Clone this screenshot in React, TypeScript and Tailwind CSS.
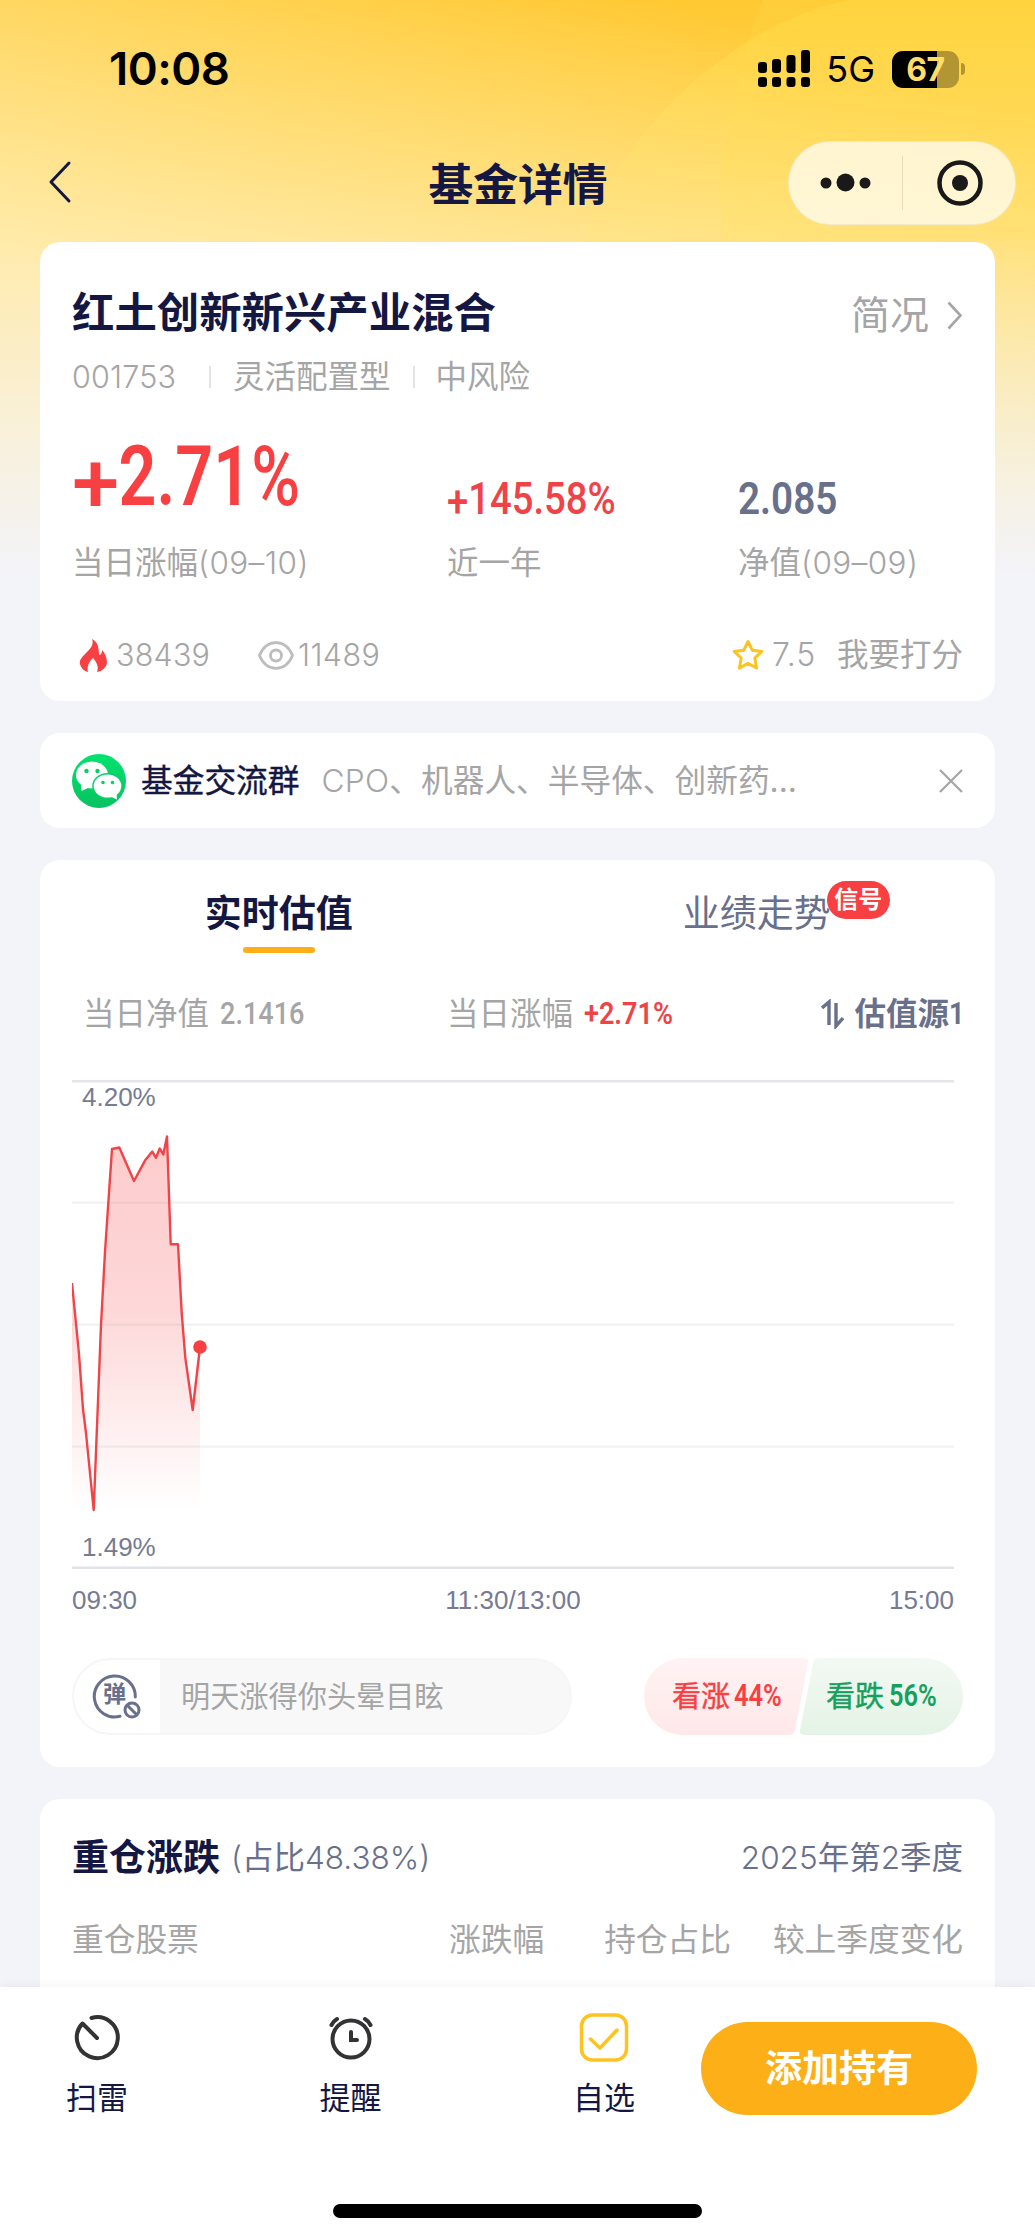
import React from "react";

const NUM = "font-['Roboto','Noto_Sans_CJK_SC',sans-serif]";
const AXIS = "font-['Liberation_Sans',Arial,sans-serif]";

const LINE_POINTS =
    "0,203 7,274 11,329 14,353 21.7,430 29,245 33,172 36.3,123 40,69 47.3,67.5 62,101 73,80.6 80.3,71.6 84,77.8 87.7,68.5 91.3,74.4 95,56.5 98.7,164.3 106,164.3 109.7,233 113.3,277.6 120.7,330 128,267";

const GRID_LINES = [121.6, 243.6, 365.6];

function Battery() {
    return (
        <div className="flex items-center gap-[2px]">
            <div className="flex h-[37px] w-[67px] items-center justify-center rounded-[11px] bg-[linear-gradient(to_right,#000_45px,rgba(0,0,0,0.3)_45px)]">
                <span className="font-['Inter',sans-serif] text-[32px] font-bold leading-[37px] tracking-[-0.5px] text-[#ffdd66]">
                    67
                </span>
            </div>
            <div className="h-[12px] w-[4px] rounded-r-full bg-black/30" />
        </div>
    );
}

function StatusBar() {
    return (
        <div className="flex h-[138px] items-center justify-between pl-[109px] pr-[70px]">
            <span className="font-['Inter',sans-serif] text-[45.5px] font-semibold leading-none tracking-[-0.5px] text-black">
                10:08
            </span>
            <div className="flex items-center">
                <svg width="52" height="38" viewBox="0 0 52 38">
                    <rect x="0" y="12" width="9" height="11" rx="3" />
                    <rect x="14" y="9" width="9" height="14" rx="3" />
                    <rect x="28.5" y="5" width="9" height="18" rx="3" />
                    <rect x="43" y="0" width="9" height="23" rx="3" />
                    <rect x="0" y="27" width="9" height="10" rx="3" />
                    <rect x="14" y="27" width="9" height="10" rx="3" />
                    <rect x="28.5" y="27" width="9" height="10" rx="3" />
                    <rect x="43" y="27" width="9" height="10" rx="3" />
                </svg>
                <span className="ml-[16px] mr-[17px] font-['Inter',sans-serif] text-[36px] leading-none text-black">
                    5G
                </span>
                <Battery />
            </div>
        </div>
    );
}

function NavBar() {
    return (
        <div className="grid h-[104px] grid-cols-3 items-start pl-[48px] pr-[19px]">
            <svg
                className="mt-[22px]"
                width="24"
                height="44"
                viewBox="0 0 24 44"
                fill="none"
                stroke="#141742"
                strokeWidth="3"
                strokeLinecap="round"
                strokeLinejoin="round"
            >
                <path d="M21 3 L3 22 L21 41" />
            </svg>
            <h1 className="-ml-[28px] mt-[17px] whitespace-nowrap text-center text-[44.8px] font-bold leading-[60px] text-[#141742]">
                基金详情
            </h1>
            <div className="ml-auto mt-[3px] flex h-[84px] w-[228px] items-center rounded-full border border-black/5 bg-white/70">
                <svg className="w-[113px]" height="20" viewBox="0 0 113 20">
                    <circle cx="37" cy="10" r="5.5" fill="#191919" />
                    <circle cx="56.5" cy="9.5" r="9" fill="#191919" />
                    <circle cx="76" cy="10" r="5.5" fill="#191919" />
                </svg>
                <div className="h-[54px] w-px bg-black/10" />
                <svg className="ml-[34px]" width="46" height="46" viewBox="0 0 46 46">
                    <circle
                        cx="23"
                        cy="23"
                        r="20.5"
                        fill="none"
                        stroke="#191919"
                        strokeWidth="4.5"
                    />
                    <circle cx="23" cy="23" r="8" fill="#191919" />
                </svg>
            </div>
        </div>
    );
}

function SummaryCard() {
    return (
        <section className="flex h-[459px] flex-col rounded-[20px] bg-white px-[32px] pt-[41px]">
            <div className="flex h-[60px] items-center justify-between">
                <h2 className="text-[42.4px] font-bold leading-[60px] text-[#141742]">
                    红土创新新兴产业混合
                </h2>
                <div className="mt-[4px] flex items-center text-[39px] text-[#a5a5a5]">
                    简况
                    <svg
                        className="ml-[18px]"
                        width="16"
                        height="29"
                        viewBox="0 0 16 29"
                        fill="none"
                        stroke="#a5a5a5"
                        strokeWidth="2.6"
                    >
                        <path d="M1.5 1.5 L13.5 14.5 L1.5 27.5" />
                    </svg>
                </div>
            </div>

            <div className="mt-[10px] flex h-[48px] items-center text-[31.5px] text-[#a5a5a5]">
                <span className="w-[105px] text-[30.5px] font-[350] tracking-[0.2px]">001753</span>
                <span className="ml-[32px] mr-[22px] h-[22px] w-[2px] bg-[#e3e3e3]" />
                <span>灵活配置型</span>
                <span className="ml-[22px] mr-[21px] h-[22px] w-[2px] bg-[#e3e3e3]" />
                <span>中风险</span>
            </div>

            <div className="mt-[37px] flex h-[84px] items-end">
                <div className={`w-[375px] ${NUM}`}>
                    <span className="inline-block origin-left scale-x-[0.8] whitespace-nowrap text-[83px] font-semibold leading-[90px] text-[#f84043]">
                        <span className="relative top-[7px] mr-[12px] inline-block origin-left scale-x-[1.28] font-medium">
                            +
                        </span>
                        2.71
                        <span className="font-medium">%</span>
                    </span>
                </div>
                <div className={`w-[291px] ${NUM}`}>
                    <span className="inline-block origin-left scale-x-[0.85] text-[45px] font-medium leading-[46px] text-[#f04347]">
                        <span className="relative top-[3px]">+</span>
                        145.58%
                    </span>
                </div>
                <div className={NUM}>
                    <span className="inline-block origin-left scale-x-[0.86] text-[45px] font-semibold leading-[46px] text-[#68708c]">
                        2.085
                    </span>
                </div>
            </div>

            <div className="mt-[18px] flex h-[46px] items-center text-[31.5px] text-[#a5a5a5]">
                <span className="w-[375px]">
                    当日涨幅<span className="font-[350] tracking-[0.4px]">(09–10)</span>
                </span>
                <span className="w-[291px]">近一年</span>
                <span>
                    净值<span className="font-[350] tracking-[0.4px]">(09–09)</span>
                </span>
            </div>

            <div className="mt-[46px] flex h-[46px] items-center text-[30.5px] font-[350] text-[#a5a5a5]">
                <svg className="ml-[7px]" width="28" height="33" viewBox="0 0 28 33">
                    <path
                        d="M13 0 C15 5 12 9 8 13 C3 18 0 21 1 25 C2 29 5 32 9 33 C8 28 9 24 14 19 C18 24 20 28 18 33 C23 32 27 29 28 24 C28 19 26 14 23 11 C23 14 22 16 20 16 C20 9 19 3 13 0 Z"
                        fill="#f84043"
                    />
                </svg>
                <span className="ml-[9px] w-[96px] tracking-[0.2px]">38439</span>
                <svg
                    className="ml-[46px]"
                    width="36"
                    height="29"
                    viewBox="0 0 36 29"
                    fill="none"
                    stroke="#bdbdbd"
                    strokeWidth="2.8"
                    strokeLinejoin="round"
                >
                    <path d="M1.5 14.5 C5 6 11 1.7 18 1.7 S31 6 34.5 14.5 C31 23 25 27.3 18 27.3 S5 23 1.5 14.5 Z" />
                    <circle cx="18" cy="14.5" r="5.5" />
                </svg>
                <span className="ml-[4px] tracking-[0.4px]">11489</span>
                <svg
                    className="ml-auto"
                    width="32"
                    height="32"
                    viewBox="0 0 32 32"
                    fill="none"
                    stroke="#fdc421"
                    strokeWidth="3"
                    strokeLinejoin="round"
                >
                    <path d="M16 2.5 L20.2 11.2 L29.8 12.5 L22.8 19.2 L24.6 29 L16 24.4 L7.4 29 L9.2 19.2 L2.2 12.5 L11.8 11.2 Z" />
                </svg>
                <span className="ml-[8px] text-[32px] tracking-[0.8px]">7.5</span>
                <span className="ml-[21px] text-[31.5px] font-normal">我要打分</span>
            </div>
        </section>
    );
}

function WeChatIcon() {
    return (
        <svg width="54" height="54" viewBox="0 0 54 54">
            <defs>
                <linearGradient id="wechat" x1="0" y1="0" x2="0" y2="1">
                    <stop offset="0" stopColor="#02e36f" />
                    <stop offset="1" stopColor="#09c160" />
                </linearGradient>
            </defs>
            <circle cx="27" cy="27" r="27" fill="url(#wechat)" />
            <path d="M9 29 L9.5 37 L18 33 Z" fill="#fff" />
            <ellipse cx="20" cy="21" rx="16" ry="13.5" fill="#fff" />
            <ellipse cx="35.5" cy="32" rx="15.3" ry="13" fill="#05d067" />
            <ellipse cx="35.5" cy="32" rx="13.8" ry="11.6" fill="#fff" />
            <path d="M37 42 L45 45.5 L44.5 38 Z" fill="#fff" />
            <circle cx="14.5" cy="17" r="2.2" fill="#05d067" />
            <circle cx="25.5" cy="17" r="2.2" fill="#05d067" />
            <circle cx="31" cy="28.5" r="1.8" fill="#05d067" />
            <circle cx="40.5" cy="28.5" r="1.8" fill="#05d067" />
        </svg>
    );
}

function GroupBanner() {
    return (
        <section className="mt-[32px] flex h-[95px] items-center rounded-[20px] bg-white px-[32px] text-[31.7px]">
            <WeChatIcon />
            <span className="ml-[15px] text-[#141742] [-webkit-text-stroke:0.4px_#141742]">
                基金交流群
            </span>
            <span className="ml-[22px] text-[#a5a5a5]">
                <span className="font-[350] tracking-[0.3px]">CPO</span>、机器人、半导体、创新药...
            </span>
            <svg
                className="ml-auto"
                width="24"
                height="24"
                viewBox="0 0 24 24"
                stroke="#a5a5a5"
                strokeWidth="2.2"
            >
                <path d="M1 1 L23 23 M23 1 L1 23" />
            </svg>
        </section>
    );
}

function ValuationChart() {
    return (
        <div className={`mt-[42px] text-[26px] text-[#767b93] ${AXIS}`}>
            <div className="relative h-[489px] w-[882px]">
                <svg className="block" width="882" height="489" viewBox="0 0 882 489">
                    <defs>
                        <linearGradient id="area" x1="0" y1="0" x2="0" y2="1">
                            <stop offset="0" stopColor="#f84043" stopOpacity="0.27" />
                            <stop offset="0.45" stopColor="#f84043" stopOpacity="0.21" />
                            <stop offset="1" stopColor="#f84043" stopOpacity="0" />
                        </linearGradient>
                    </defs>
                    {GRID_LINES.map((y) => (
                        <rect key={y} x="0" y={y} width="882" height="2" fill="#f0f1f4" />
                    ))}
                    <rect x="0" y="0" width="882" height="2.5" fill="#e4e6ec" />
                    <rect x="0" y="486.5" width="882" height="2.5" fill="#e0e3ea" />
                    <polygon points={`0,431 ${LINE_POINTS} 128,431`} fill="url(#area)" />
                    <polyline
                        points={LINE_POINTS}
                        fill="none"
                        stroke="#f04548"
                        strokeWidth="2.4"
                        strokeLinejoin="round"
                    />
                    <circle cx="128" cy="267" r="6.8" fill="#f84043" />
                </svg>
                <span className="absolute left-[10px] top-[2px] leading-[30px]">4.20%</span>
                <span className="absolute bottom-[7px] left-[10px] leading-[30px]">1.49%</span>
            </div>
            <div className="mt-[14px] grid grid-cols-[1fr_auto_1fr] pr-[9px] leading-[34px]">
                <span>09:30</span>
                <span>11:30/13:00</span>
                <span className="text-right">15:00</span>
            </div>
        </div>
    );
}

function BarrageIcon() {
    return (
        <div className="relative h-[46px] w-[50px]">
            <svg
                className="absolute inset-0"
                width="50"
                height="46"
                viewBox="0 0 50 46"
                fill="none"
                stroke="#68708c"
                strokeWidth="3"
                strokeLinecap="round"
            >
                <path d="M28 42.3 A20.5 20.5 0 1 1 43.3 23" />
                <circle cx="40" cy="36" r="7" />
                <path d="M35.5 31.5 L44.5 40.5" />
            </svg>
            <span className="absolute left-[11px] top-[8px] text-[23px] font-bold leading-[25px] text-[#68708c]">
                弹
            </span>
        </div>
    );
}

function VoteRow() {
    return (
        <div className="mt-[41px] flex items-center justify-between">
            <div className="flex h-[77px] w-[500px] items-center overflow-hidden rounded-full border-2 border-[#f6f6f6] bg-[#f8f8f8]">
                <div className="flex h-full w-[86px] items-center bg-white pl-[18px]">
                    <BarrageIcon />
                </div>
                <span className="ml-[21px] text-[29.2px] text-[#a5a5a5]">
                    明天涨得你头晕目眩
                </span>
            </div>
            <div className="relative h-[77px] w-[319px]">
                <svg className="absolute inset-0" width="319" height="77" viewBox="0 0 319 77">
                    <defs>
                        <linearGradient id="up" x1="0" y1="0" x2="0" y2="1">
                            <stop offset="0" stopColor="#fff3f3" />
                            <stop offset="1" stopColor="#ffe8e9" />
                        </linearGradient>
                        <linearGradient id="down" x1="0" y1="0" x2="0" y2="1">
                            <stop offset="0" stopColor="#f3f9f3" />
                            <stop offset="1" stopColor="#e5f3e6" />
                        </linearGradient>
                    </defs>
                    <path
                        d="M38.5 0 H160 Q165 0 164 5 L151 72 Q150 77 145 77 H38.5 A38.5 38.5 0 0 1 38.5 0 Z"
                        fill="url(#up)"
                    />
                    <path
                        d="M175 0 H280.5 A38.5 38.5 0 0 1 280.5 77 H160 Q155 77 156 72 L169 5 Q170 0 175 0 Z"
                        fill="url(#down)"
                    />
                </svg>
                <div className="relative flex h-full items-center text-[29px]">
                    <span className="ml-[28px] text-[#f84043] [-webkit-text-stroke:0.4px_#f84043]">
                        看涨
                    </span>
                    <span
                        className={`ml-[4px] w-[50px] origin-left scale-x-[0.82] text-[31px] font-semibold text-[#f84043] ${NUM}`}
                    >
                        44%
                    </span>
                    <span className="ml-[42px] text-[#16a05d] [-webkit-text-stroke:0.4px_#16a05d]">
                        看跌
                    </span>
                    <span
                        className={`ml-[5px] w-[50px] origin-left scale-x-[0.82] text-[31px] font-semibold text-[#16a05d] ${NUM}`}
                    >
                        56%
                    </span>
                </div>
            </div>
        </div>
    );
}

function ValuationCard() {
    return (
        <section className="mt-[32px] h-[907px] rounded-[20px] bg-white px-[32px]">
            <div className="grid grid-cols-2 text-[37px]">
                <div className="flex flex-col items-center pr-[32px] pt-[27px]">
                    <span className="font-bold leading-[54px] text-[#141742]">实时估值</span>
                    <span className="mt-[6px] h-[6px] w-[72px] rounded-full bg-[#fdaf18]" />
                </div>
                <div className="flex justify-center pl-[33px] pt-[27px]">
                    <div className="relative leading-[54px] text-[#68708c]">
                        业绩走势
                        <span className="absolute -right-[59px] -top-[6px] flex h-[38px] w-[63px] items-center justify-center rounded-full bg-[#f84043] text-[24px] font-bold leading-none text-white">
                            信号
                        </span>
                    </div>
                </div>
            </div>

            <div className="mt-[37px] flex h-[48px] items-center text-[31.5px] text-[#a5a5a5]">
                <div className="flex w-[375px] items-center pl-[11px]">
                    当日净值
                    <span
                        className={`ml-[11px] origin-left scale-x-[0.86] font-medium ${NUM}`}
                    >
                        2.1416
                    </span>
                </div>
                <div className="flex items-center">
                    当日涨幅
                    <span
                        className={`ml-[11px] w-[90px] origin-left scale-x-[0.86] font-semibold text-[#f04347] ${NUM}`}
                    >
                        +2.71%
                    </span>
                </div>
                <div className="ml-auto flex items-center font-bold text-[#68708c]">
                    <svg
                        className="mr-[10px]"
                        width="23"
                        height="30"
                        viewBox="0 0 23 30"
                        fill="none"
                        stroke="#68708c"
                        strokeWidth="3.4"
                    >
                        <path d="M1 9 L8 3 V26 M15 4 V27 L22 19" />
                    </svg>
                    估值源
                    <span className={`w-[14px] origin-left scale-x-[0.85] ${NUM}`}>1</span>
                </div>
            </div>

            <ValuationChart />
            <VoteRow />
        </section>
    );
}

function HoldingsCard() {
    return (
        <section className="mt-[32px] h-[220px] rounded-t-[20px] bg-white px-[32px] pt-[32px]">
            <div className="flex h-[54px] items-center text-[31.5px] text-[#68708c]">
                <h3 className="text-[37px] font-bold text-[#141742]">重仓涨跌</h3>
                <span className="ml-[11px] font-[350]">
                    (<span className="font-normal">占比</span>48.38%)
                </span>
                <span className="ml-auto">
                    <span className="font-[350]">2025</span>年第
                    <span className="font-[350]">2</span>季度
                </span>
            </div>
            <div className="mt-[32px] flex h-[46px] items-center text-[31.7px] text-[#a5a5a5]">
                <span className="w-[377px]">重仓股票</span>
                <span>涨跌幅</span>
                <span className="ml-auto">持仓占比</span>
                <span className="ml-[42px]">较上季度变化</span>
            </div>
        </section>
    );
}

function TabBar() {
    return (
        <footer className="relative flex h-[253px] flex-col bg-white shadow-[0_0_12px_rgba(0,0,0,0.06)]">
            <div className="flex pt-[25px] text-[31px] text-[#141742]">
                <div className="flex w-[194px] flex-col items-center">
                    <svg
                        width="52"
                        height="52"
                        viewBox="0 0 52 52"
                        fill="none"
                        stroke="#333335"
                        strokeWidth="4"
                        strokeLinecap="round"
                        strokeLinejoin="round"
                    >
                        <path d="M20.5 6 A20.5 20.5 0 1 1 11.5 11.5 L26 26" />
                    </svg>
                    <span className="mt-[11px] leading-[46px]">扫雷</span>
                </div>
                <div className="flex w-[313px] flex-col items-center">
                    <svg
                        width="52"
                        height="52"
                        viewBox="0 0 52 52"
                        fill="none"
                        stroke="#333335"
                        strokeWidth="4"
                        strokeLinecap="round"
                    >
                        <circle cx="26" cy="27" r="18.5" />
                        <path d="M26 20 V28 H32 M6.5 13 Q8.5 9 12 7 M40 7 Q43.5 9 45.5 13" />
                    </svg>
                    <span className="mt-[11px] leading-[46px]">提醒</span>
                </div>
                <div className="flex w-[194px] flex-col items-center">
                    <svg
                        width="52"
                        height="52"
                        viewBox="0 0 52 52"
                        fill="none"
                        stroke="#fdc421"
                        strokeWidth="3.5"
                        strokeLinecap="round"
                        strokeLinejoin="round"
                    >
                        <rect x="3.5" y="3" width="45" height="45" rx="11" />
                        <path d="M12.5 27 L22 36 L39 18" />
                    </svg>
                    <span className="mt-[11px] leading-[46px]">自选</span>
                </div>
                <button className="mt-[10px] h-[93px] w-[276px] rounded-full bg-[#fdaf18] text-[37px] font-bold text-white">
                    添加持有
                </button>
            </div>
            <div className="mx-auto mb-[22px] mt-auto h-[14px] w-[369px] rounded-full bg-black" />
        </footer>
    );
}

export default function App() {
    return (
        <div className="relative h-[2240px] w-[1035px] overflow-hidden bg-[#f3f4fa] font-['Inter','Noto_Sans_CJK_SC',sans-serif]">
            {/* Yellow header glow, sits behind the cards */}
            <svg
                className="absolute left-0 top-0"
                width="1035"
                height="580"
                viewBox="0 0 1035 580"
            >
                <defs>
                    <linearGradient
                        id="glow"
                        gradientUnits="userSpaceOnUse"
                        x1="660"
                        y1="0"
                        x2="530"
                        y2="420"
                    >
                        <stop offset="0" stopColor="#ffc933" />
                        <stop offset="0.5" stopColor="#ffd968" />
                        <stop offset="1" stopColor="#ffe8a4" />
                    </linearGradient>
                    <linearGradient id="haze" x1="0" y1="0" x2="0" y2="1">
                        <stop offset="0" stopColor="#ffe98a" stopOpacity="0" />
                        <stop offset="0.42" stopColor="#ffefb5" stopOpacity="0.45" />
                        <stop offset="1" stopColor="#ffefc0" stopOpacity="0.6" />
                    </linearGradient>
                    <linearGradient id="fade" x1="0" y1="0" x2="0" y2="1">
                        <stop offset="0.42" stopColor="#f3f4fa" stopOpacity="0" />
                        <stop offset="1" stopColor="#f3f4fa" />
                    </linearGradient>
                    <linearGradient id="arc" x1="0" y1="0" x2="0" y2="1">
                        <stop offset="0" stopColor="#ffe04a" stopOpacity="0.35" />
                        <stop offset="0.4" stopColor="#ffe580" stopOpacity="0.35" />
                        <stop offset="1" stopColor="#ffe98a" stopOpacity="0.2" />
                    </linearGradient>
                </defs>
                <rect width="1035" height="580" fill="url(#glow)" />
                <rect width="1035" height="580" fill="url(#haze)" />
                <path d="M762 0 Q735 70 720 180 L722 240 H1035 V0 Z" fill="#ffe04a" opacity="0.2" />
                <path
                    d="M585 240 C600 180 660 100 735 50 C770 25 810 8 850 0 H1035 V580 H585 Z"
                    fill="url(#arc)"
                />
                <rect width="1035" height="580" fill="url(#fade)" />
            </svg>

            <div className="relative h-[1987px] overflow-hidden">
                <StatusBar />
                <NavBar />
                <main className="px-[40px]">
                    <SummaryCard />
                    <GroupBanner />
                    <ValuationCard />
                    <HoldingsCard />
                </main>
            </div>
            <TabBar />
        </div>
    );
}
